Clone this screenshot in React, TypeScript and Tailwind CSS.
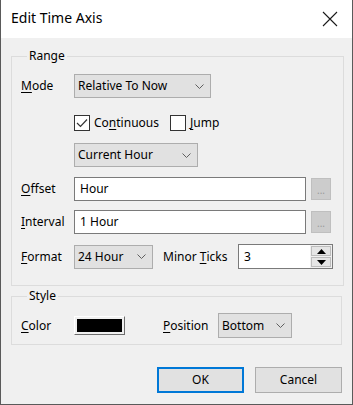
import { useState } from "react";

const Chevron = () => (
  <svg width="9" height="5" viewBox="0 0 9 5" className="shrink-0">
    <path d="M0.5 0.5 L4.5 4.5 L8.5 0.5" fill="none" stroke="#5f5f5f" strokeWidth="1" />
  </svg>
);

const Combo = ({ value, className }: { value: string; className: string }) => (
  <div
    className={`flex items-center justify-between h-[24px] bg-[#e1e1e1] border border-[#adadad] pl-[3px] pr-[6px] ${className}`}
  >
    <span>{value}</span>
    <Chevron />
  </div>
);

const Label = ({ k, rest, className = "" }: { k: string; rest: string; className?: string }) => (
  <span className={className}>
    <span className="underline underline-offset-2">{k}</span>
    {rest}
  </span>
);

const Ellipsis = () => (
  <div className="w-[20px] h-[22px] bg-[#cccccc] border border-[#bfbfbf] flex items-end justify-center pb-[4px] text-[#9a9a9a] text-[10px] leading-none">
    ...
  </div>
);

const CheckBox = ({ checked }: { checked: boolean }) => (
  <div className="w-[16px] h-[16px] bg-white border border-[#333333] flex items-center justify-center">
    {checked && (
      <svg width="12" height="10" viewBox="0 0 12 10">
        <path d="M1 5 L4.5 8.5 L11 1.5" fill="none" stroke="#333333" strokeWidth="1.2" />
      </svg>
    )}
  </div>
);

export default function App() {
  const [ticks] = useState("3");
  return (
    <div
      className="w-[353px] h-[405px] bg-[#f0f0f0] border-x border-b border-[#5a5a5a] flex flex-col text-[12px] leading-[16px] text-black"
      style={{ fontFamily: '"Noto Sans", "Open Sans", sans-serif' }}
    >
      <div className="h-[38px] bg-white flex items-center justify-between pl-[10px] pr-[14px] shrink-0">
        <span className="text-[14px] mb-[2px]">Edit Time Axis</span>
        <svg width="16" height="16" viewBox="0 0 16 16">
          <path d="M1 1 L15 15 M15 1 L1 15" stroke="#1a1a1a" strokeWidth="1.1" />
        </svg>
      </div>

      <div className="px-[10px] flex flex-col">
        <fieldset className="mt-[10px] border border-[#dcdcdc] pl-[9px] pr-[10px] pb-[16px] h-[238px]">
          <legend className="ml-[6px] px-[2px]">Range</legend>

          <div className="flex items-center mt-[10px]">
            <Label k="M" rest="ode" className="w-[53px]" />
            <Combo value="Relative To Now" className="w-[137px]" />
          </div>

          <div className="flex items-center mt-[17px] ml-[53px]">
            <CheckBox checked />
            <span className="ml-[4px] w-[76px]">
              Co<span className="underline underline-offset-2">n</span>tinuous
            </span>
            <CheckBox checked={false} />
            <span className="ml-[4px]">
              <span className="underline underline-offset-2">J</span>ump
            </span>
          </div>

          <div className="flex mt-[12px] ml-[53px]">
            <Combo value="Current Hour" className="w-[124px]" />
          </div>

          <div className="flex items-center mt-[10px]">
            <Label k="O" rest="ffset" className="w-[53px]" />
            <div className="w-[232px] h-[24px] bg-white border border-[#7a7a7a] flex items-center pl-[5px]">Hour</div>
            <div className="ml-[5px]">
              <Ellipsis />
            </div>
          </div>

          <div className="flex items-center mt-[9px]">
            <Label k="I" rest="nterval" className="w-[53px]" />
            <div className="w-[232px] h-[24px] bg-white border border-[#7a7a7a] flex items-center pl-[5px]">1 Hour</div>
            <div className="ml-[5px]">
              <Ellipsis />
            </div>
          </div>

          <div className="flex items-center mt-[10px]">
            <Label k="F" rest="ormat" className="w-[53px]" />
            <Combo value="24 Hour" className="w-[79px]" />
            <span className="ml-[10px] w-[75px]">
              Minor <span className="underline underline-offset-2">T</span>icks
            </span>
            <div className="w-[95px] h-[25px] bg-white border border-[#7a7a7a] flex">
              <div className="flex-1 flex items-center pl-[5px]">{ticks}</div>
              <div className="w-[22px] flex flex-col bg-[#f0f0f0] p-[1px] gap-[1px]">
                <div className="flex-1 bg-[#e5e5e5] border border-[#bcbcbc] flex items-center justify-center">
                  <svg width="9" height="5" viewBox="0 0 9 5">
                    <path d="M0 5 L4.5 0 L9 5 Z" fill="#000" />
                  </svg>
                </div>
                <div className="flex-1 bg-[#e5e5e5] border border-[#bcbcbc] flex items-center justify-center">
                  <svg width="9" height="5" viewBox="0 0 9 5">
                    <path d="M0 0 L4.5 5 L9 0 Z" fill="#000" />
                  </svg>
                </div>
              </div>
            </div>
          </div>
        </fieldset>

        <fieldset className="mt-[2px] border border-[#dcdcdc] pl-[9px] pr-[10px] h-[57px]">
          <legend className="ml-[6px] px-[2px]">Style</legend>
          <div className="flex items-center mt-[9px]">
            <Label k="C" rest="olor" className="w-[53px]" />
            <div className="w-[51px] h-[19px] border border-t-white border-l-white border-b-[#6d6d6d] border-r-[#6d6d6d] bg-[#f0f0f0] p-[2px]">
              <div className="w-full h-full bg-black" />
            </div>
            <Label k="P" rest="osition" className="ml-[38px] w-[55px]" />
            <Combo value="Bottom" className="w-[74px] h-[25px]" />
          </div>
        </fieldset>

        <div className="flex justify-end gap-[11px] mt-[22px]">
          <button className="w-[87px] h-[26px] bg-[#e1e1e1] border-2 border-[#0078d7]">OK</button>
          <button className="w-[87px] h-[26px] bg-[#e1e1e1] border border-[#adadad]">Cancel</button>
        </div>
      </div>
    </div>
  );
}
